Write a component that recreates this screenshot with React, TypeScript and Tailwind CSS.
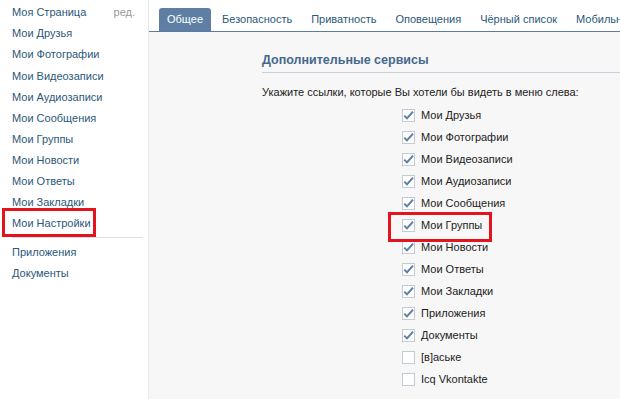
import { useState } from 'react';

const menu = [
  'Моя Страница',
  'Мои Друзья',
  'Мои Фотографии',
  'Мои Видеозаписи',
  'Мои Аудиозаписи',
  'Мои Сообщения',
  'Мои Группы',
  'Мои Новости',
  'Мои Ответы',
  'Мои Закладки',
  'Мои Настройки',
];

const extraMenu = ['Приложения', 'Документы'];

const tabs = ['Общее', 'Безопасность', 'Приватность', 'Оповещения', 'Чёрный список', 'Мобильные сервисы'];

const services = [
  { label: 'Мои Друзья', on: true },
  { label: 'Мои Фотографии', on: true },
  { label: 'Мои Видеозаписи', on: true },
  { label: 'Мои Аудиозаписи', on: true },
  { label: 'Мои Сообщения', on: true },
  { label: 'Мои Группы', on: true },
  { label: 'Мои Новости', on: true },
  { label: 'Мои Ответы', on: true },
  { label: 'Мои Закладки', on: true },
  { label: 'Приложения', on: true },
  { label: 'Документы', on: true },
  { label: '[в]аське', on: false },
  { label: 'Icq Vkontakte', on: false },
];

function Checkbox({ checked }: { checked: boolean }) {
  return (
    <span className="flex h-[13px] w-[13px] shrink-0 items-center justify-center border border-[#c3cbd4] bg-white">
      {checked && (
        <svg width="11" height="11" viewBox="0 0 11 11">
          <path d="M1.3 5.6 L4 8.4 L10 1.6" fill="none" stroke="#5a7ea6" strokeWidth="2" />
        </svg>
      )}
    </span>
  );
}

export default function App() {
  const [checks, setChecks] = useState(services.map((s) => s.on));

  return (
    <div className="relative flex h-[399px] w-[620px] overflow-hidden bg-white text-[11px] font-['Liberation_Sans',Arial,sans-serif]">
      <aside className="w-[149px] shrink-0 border-r border-[#e6e8eb] pt-[2px]">
        {menu.map((item, i) => (
          <div key={item} className="flex h-[21.1px] items-center pl-[12px] pr-[13px] text-[#2b587a]">
            <span>{item}</span>
            {i === 0 && <span className="ml-auto text-[#999]">ред.</span>}
          </div>
        ))}
        <div className="ml-[12px] mr-[5px] mt-[3px] mb-[4px] border-t border-[#dae1e8]" />
        {extraMenu.map((item) => (
          <div key={item} className="flex h-[21px] items-center pl-[12px] text-[#2b587a]">
            {item}
          </div>
        ))}
      </aside>

      <main className="flex min-w-0 flex-1 flex-col bg-[#f7f7f7]">
        <nav className="flex h-[32px] shrink-0 items-end gap-[3px] border-b border-[#5b7ba0] bg-white pl-[10px]">
          {tabs.map((tab, i) => (
            <div
              key={tab}
              className={
                i === 0
                  ? 'flex h-[23px] items-center whitespace-nowrap rounded-t-[3px] bg-[#5e7fa3] px-[8px] text-white'
                  : 'flex h-[23px] items-center whitespace-nowrap px-[8px] text-[#2b587a]'
              }
            >
              {tab}
            </div>
          ))}
        </nav>

        <section className="pl-[113px] pt-[19px]">
          <h2 className="whitespace-nowrap border-b border-[#c5d0db] pb-[2px] text-[12.5px] font-bold text-[#45688e]">
            Дополнительные сервисы
          </h2>
          <p className="mt-[11px] whitespace-nowrap text-[#222]">
            Укажите ссылки, которые Вы хотели бы видеть в меню слева:
          </p>
          <ul className="mt-[4px] pl-[140px]">
            {services.map((s, i) => (
              <li
                key={s.label}
                className="flex h-[22px] cursor-pointer items-center gap-[6px] whitespace-nowrap text-[#222]"
                onClick={() => setChecks((c) => c.map((v, j) => (j === i ? !v : v)))}
              >
                <Checkbox checked={checks[i]} />
                <span>{s.label}</span>
              </li>
            ))}
          </ul>
        </section>
      </main>

      <div className="pointer-events-none absolute left-[2px] top-[208px] h-[29px] w-[94px] border-[3px] border-[#e3141d]" />
      <div className="pointer-events-none absolute left-[388px] top-[212px] h-[30px] w-[104px] border-[3px] border-[#e3141d]" />
    </div>
  );
}
